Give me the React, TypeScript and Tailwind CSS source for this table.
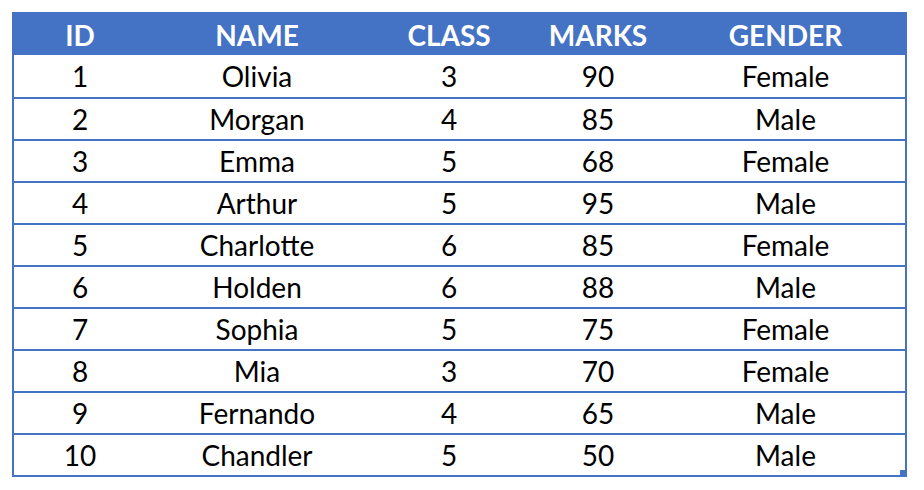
const rows = [
  [1, "Olivia", 3, 90, "Female"],
  [2, "Morgan", 4, 85, "Male"],
  [3, "Emma", 5, 68, "Female"],
  [4, "Arthur", 5, 95, "Male"],
  [5, "Charlotte", 6, 85, "Female"],
  [6, "Holden", 6, 88, "Male"],
  [7, "Sophia", 5, 75, "Female"],
  [8, "Mia", 3, 70, "Female"],
  [9, "Fernando", 4, 65, "Male"],
  [10, "Chandler", 5, 50, "Male"],
];

const headers = ["ID", "NAME", "CLASS", "MARKS", "GENDER"];
const widths = ["w-[132px]", "w-[222px]", "w-[162px]", "w-[136px]", "flex-1"];

export default function App() {
  return (
    <div className="w-[924px] h-[490px] bg-white pt-[12px] pl-[12px] font-['Lato','Open_Sans',sans-serif]">
      <div className="relative w-[895px] border-2 border-[#4472c4]">
        <div className="flex h-[41px] bg-[#4472c4] text-white font-bold text-[28px] leading-none items-center">
          {headers.map((h, i) => (
            <div key={h} className={`${widths[i]} text-center`}>
              {h}
            </div>
          ))}
        </div>
        {rows.map((r, idx) => (
          <div
            key={idx}
            className={`flex h-[42px] items-center text-black text-[28px] leading-none ${
              idx > 0 ? "border-t-2 border-[#4472c4]" : ""
            }`}
          >
            {r.map((c, i) => (
              <div key={i} className={`${widths[i]} text-center`}>
                {c}
              </div>
            ))}
          </div>
        ))}
        <div className="absolute right-0 bottom-0 w-[5px] h-[5px] bg-[#4472c4]" />
      </div>
    </div>
  );
}
